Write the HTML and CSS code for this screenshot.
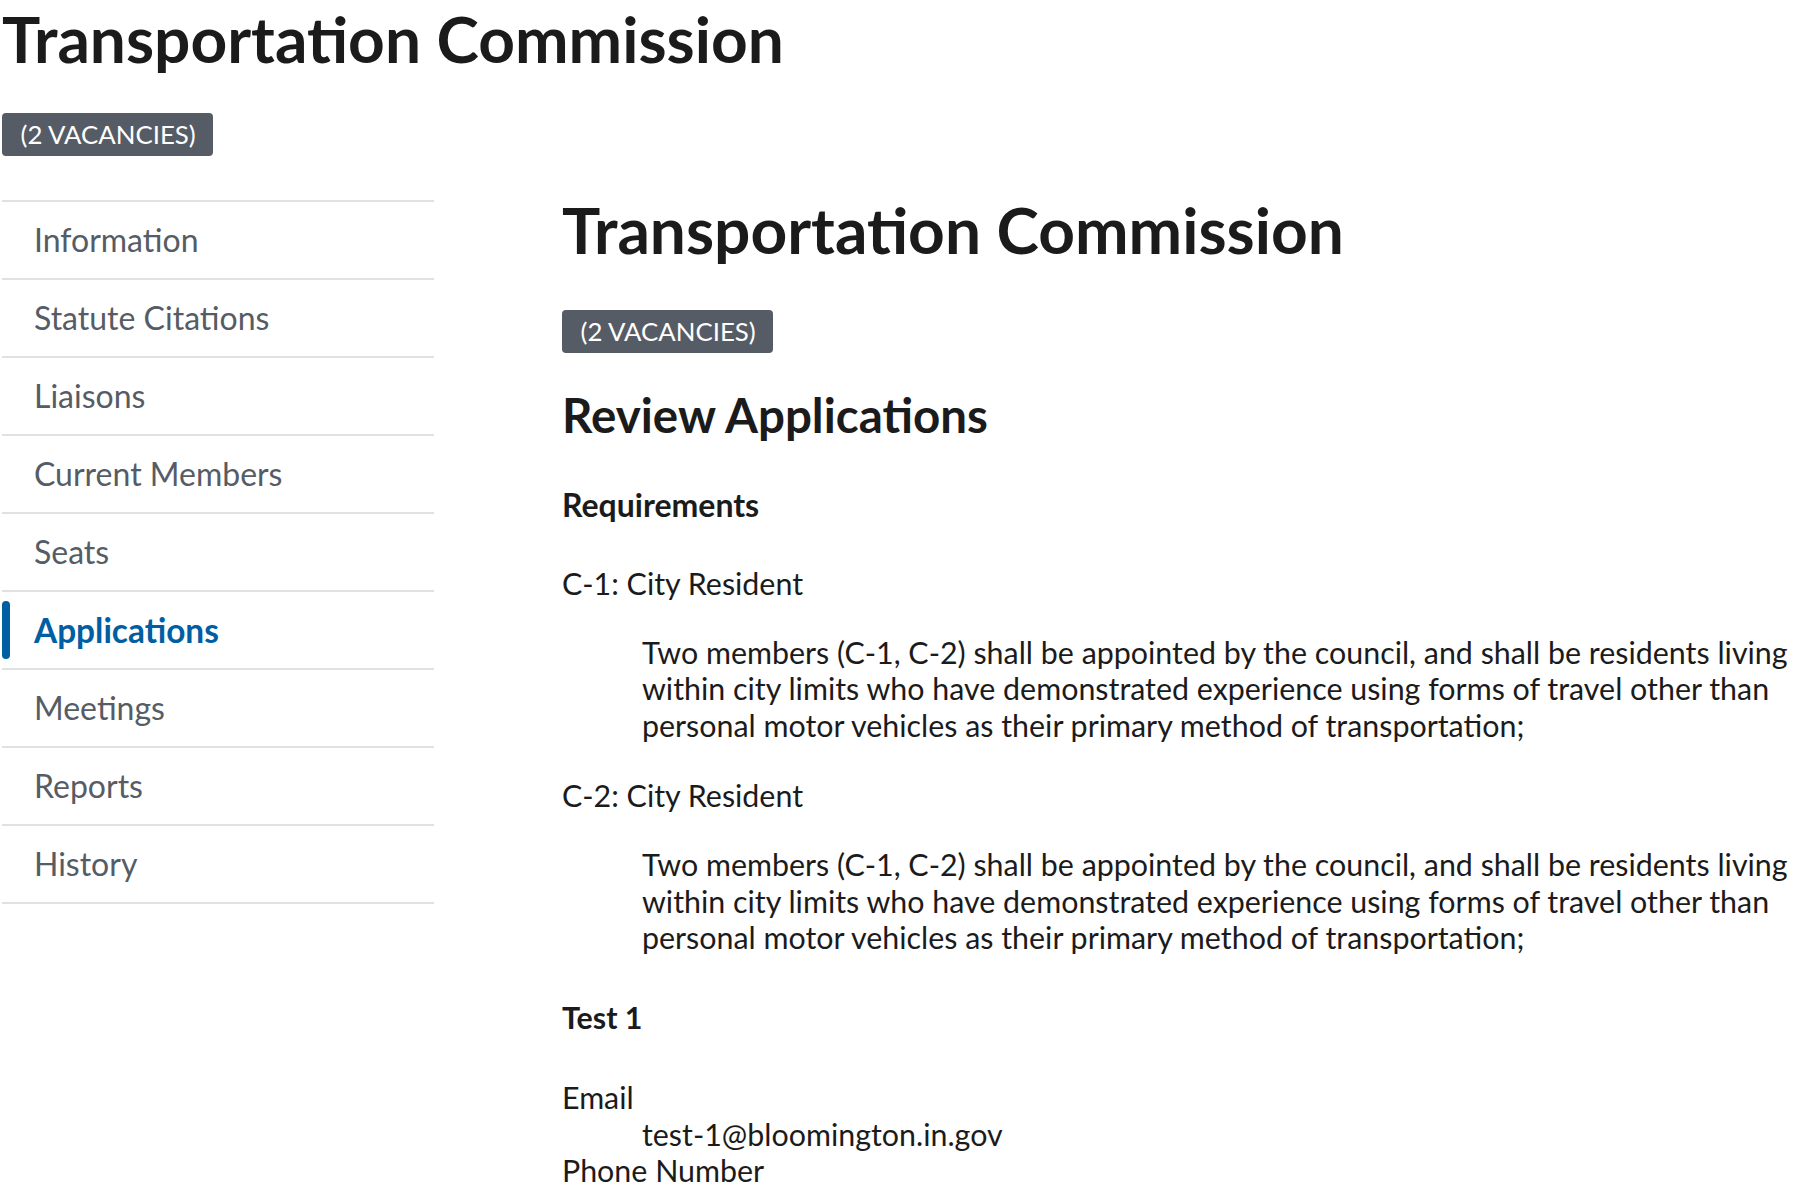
FILE: index.html
```html
<!DOCTYPE html>
<html lang="en">
<head>
<meta charset="utf-8">
<title>Transportation Commission</title>
<link rel="stylesheet" href="styles.css">
</head>
<body>
<header class="page-header">
  <h1 class="title title-top">Transportation Commission</h1>
  <div class="badge-row top-badge"><span class="badge">(2 VACANCIES)</span></div>
</header>
<div class="layout">
  <nav class="sidenav">
    <ul>
      <li><a href="#">Information</a></li>
      <li><a href="#">Statute Citations</a></li>
      <li><a href="#">Liaisons</a></li>
      <li><a href="#">Current Members</a></li>
      <li><a href="#">Seats</a></li>
      <li class="current"><a href="#">Applications</a></li>
      <li><a href="#">Meetings</a></li>
      <li><a href="#">Reports</a></li>
      <li><a href="#">History</a></li>
    </ul>
  </nav>
  <main class="main">
    <h1 class="title">Transportation Commission</h1>
    <div class="badge-row main-badge"><span class="badge">(2 VACANCIES)</span></div>
    <h2 class="section-title">Review Applications</h2>
    <h3 class="sub-title">Requirements</h3>
    <dl class="reqs">
      <dt class="req-first">C-1: City Resident</dt>
      <dd class="req-desc">Two members (C-1, C-2) shall be appointed by the council, and shall be residents living within city limits who have demonstrated experience using forms of travel other than personal motor vehicles as their primary method of transportation;</dd>
      <dt class="req-next">C-2: City Resident</dt>
      <dd class="req-desc">Two members (C-1, C-2) shall be appointed by the council, and shall be residents living within city limits who have demonstrated experience using forms of travel other than personal motor vehicles as their primary method of transportation;</dd>
    </dl>
    <h3 class="applicant">Test 1</h3>
    <dl class="contact">
      <dt>Email</dt>
      <dd>test-1@bloomington.in.gov</dd>
      <dt>Phone Number</dt>
    </dl>
  </main>
</div>
</body>
</html>
```
FILE: styles.css
```css
html, body {
  margin: 0;
  padding: 0;
}
body {
  font-family: Lato, "Open Sans", sans-serif;
  color: #1b1b1b;
  background: #fff;
  padding: 0 0 0 2px;
}
.title {
  font-size: 64px;
  line-height: 60px;
  font-weight: 700;
  margin: 0;
  color: #1b1b1b;
}
.title-top {
  line-height: normal;
}
.badge-row {
  line-height: 0;
}
.top-badge {
  margin-top: 36.2px;
}
.badge {
  display: inline-block;
  background: #565c65;
  color: #fff;
  font-size: 25.8px;
  line-height: 43px;
  height: 43px;
  padding: 0 17.5px 0 18.5px;
  border-radius: 4px;
  white-space: nowrap;
}
.layout {
  display: flex;
  align-items: flex-start;
  margin-top: 44px;
}
.sidenav {
  flex: 0 0 432px;
}
.sidenav ul {
  list-style: none;
  margin: 0;
  padding: 0;
  border-top: 2px solid #dfe1e2;
}
.sidenav li {
  position: relative;
  border-bottom: 2px solid #dfe1e2;
}
.sidenav a {
  display: block;
  height: 76px;
  line-height: 76px;
  padding-left: 32px;
  font-size: 32px;
  color: #565c65;
  text-decoration: none;
}
.sidenav .current a {
  color: #005ea2;
  font-weight: 700;
  font-size: 33.4px;
}
.sidenav .current::before {
  content: "";
  position: absolute;
  left: 0;
  top: 9px;
  bottom: 9px;
  width: 8px;
  border-radius: 4px;
  background: #005ea2;
}
.main {
  flex: 1;
  margin-left: 128px;
  font-size: 30.4px;
  line-height: 36.7px;
}
.main-badge {
  margin-top: 50px;
}
.section-title {
  font-size: 47.5px;
  line-height: 56px;
  font-weight: 700;
  margin: 33.6px 0 0;
}
.sub-title {
  font-size: 32px;
  line-height: 38px;
  font-weight: 700;
  margin: 42.8px 0 0;
}
.reqs {
  margin: 41.4px 0 0;
}
.reqs dt {
  margin: 0;
}
.reqs .req-next {
  margin-top: 33.4px;
}
.req-desc {
  margin: 32px 0 0 80px;
}
.applicant {
  font-size: 30.4px;
  line-height: 36.7px;
  font-weight: 700;
  margin: 42.9px 0 0;
}
.contact {
  margin: 43.3px 0 0;
}
.contact dd {
  margin: 0 0 0 80px;
}
```
